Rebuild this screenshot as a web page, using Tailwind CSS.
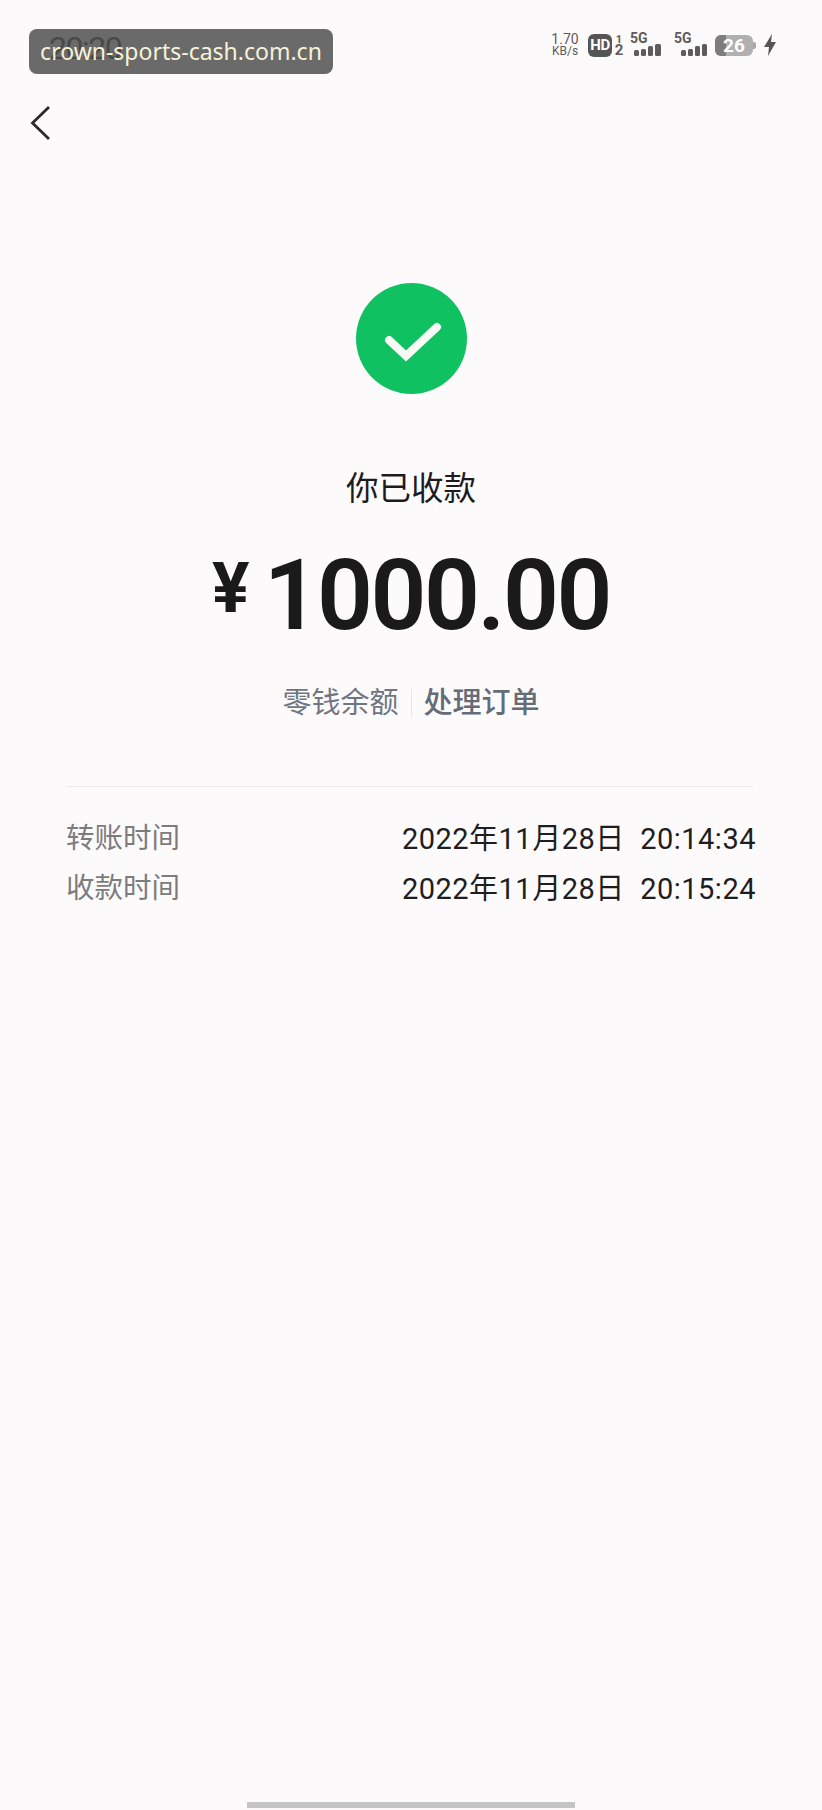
<!DOCTYPE html>
<html lang="zh-CN">
<head>
    <meta charset="UTF-8">
    <meta name="viewport" content="width=device-width, initial-scale=1.0">
    <title>你已收款</title>
    <script src="https://cdn.jsdelivr.net/npm/@tailwindcss/browser@4"></script>
</head>
<body class="bg-[#fdfafc] font-['Roboto','Noto_Sans_CJK_SC',sans-serif]">
    <div class="relative h-[1810px] w-[822px] overflow-hidden flex flex-col">
        <!-- Watermark badge over the status bar -->
        <div class="absolute left-[29px] top-[29px] w-[304px] h-[45px] rounded-[8px] bg-[#505050]/85 flex items-center justify-center text-[#f6f2d6] text-[23px] leading-none font-['Noto_Sans',sans-serif]">crown-sports-cash.com.cn</div>

        <!-- Status bar -->
        <div class="h-[80px] pl-[49px] pr-[45px] pt-[29px] flex items-start justify-between">
            <span class="text-[32px] leading-[38px] tracking-[-1.5px] text-[#222222]">20:20</span>
            <div class="flex items-center h-[28px] mt-[2px] text-[#5c5c5c]">
                <div class="w-[30px] flex flex-col items-center leading-[12px] mr-[8px]"><span class="text-[14px]">1.70</span><span class="text-[12px]">KB/s</span></div>
                <div class="w-[24px] h-[23px] rounded-[6px] bg-[#555555] text-white text-[15px] font-bold leading-[23px] text-center tracking-[-0.5px]">HD</div>
                <div class="w-[10px] ml-[2px] flex flex-col items-center font-bold text-[11px] leading-[11px]"><span>1</span><span class="text-[15px]">2</span></div>
                <svg class="ml-[6px]" width="38" height="32" viewBox="0 -3 38 32">
                    <text x="0" y="11" font-size="14" font-weight="700" fill="#5c5c5c">5G</text>
                    <rect x="4" y="18" width="5" height="6" rx="1.5" fill="#5c5c5c"/><rect x="11" y="17" width="5" height="7" rx="1.5" fill="#5c5c5c"/><rect x="18" y="14" width="5" height="10" rx="1.5" fill="#5c5c5c"/><rect x="25" y="12" width="6" height="12" rx="1.5" fill="#5c5c5c"/>
                </svg>
                <svg class="ml-[6px]" width="38" height="32" viewBox="0 -3 38 32">
                    <text x="0" y="11" font-size="14" font-weight="700" fill="#5c5c5c">5G</text>
                    <rect x="7" y="18" width="5" height="6" rx="1.5" fill="#5c5c5c"/><rect x="14" y="17" width="5" height="7" rx="1.5" fill="#5c5c5c"/><rect x="21" y="14" width="5" height="10" rx="1.5" fill="#5c5c5c"/><rect x="28" y="12" width="5" height="12" rx="1.5" fill="#5c5c5c"/>
                </svg>
                <div class="ml-[3px] relative w-[38px] h-[21px] rounded-[6px] bg-[#b0b0b0] overflow-hidden text-center text-white text-[19px] font-bold leading-[21px]">
                    <div class="absolute left-0 top-0 w-[11px] h-full bg-[#7d7d7d]"></div>
                    <span class="relative">26</span>
                </div>
                <div class="w-[3px] h-[7px] bg-[#a9a9a9] rounded-r-[2px]"></div>
                <svg class="ml-[7px]" width="14" height="24" viewBox="0 0 14 24"><path d="M9 1 L1 14 H6 L5 23 L13 9 H8 Z" fill="#555555"/></svg>
            </div>
        </div>

        <!-- Back arrow -->
        <svg class="ml-[29px] mt-[24px]" width="24" height="38" viewBox="0 0 24 38"><path d="M20 3 L3.5 19 L20 35" fill="none" stroke="#2b2b2b" stroke-width="2.8"/></svg>

        <!-- Result -->
        <div class="flex flex-col items-center">
            <div class="mt-[141px] ml-[1px] w-[111px] h-[111px] rounded-full bg-[#0fc160] flex items-center justify-center">
                <svg width="60" height="46" viewBox="0 0 60 46"><path d="M7 24 L24 40 L55 11" fill="none" stroke="#f8fbf5" stroke-width="8" stroke-linecap="round"/></svg>
            </div>
            <div class="mt-[71px] text-[32.5px] leading-[48px] text-[#1c1c1c]">你已收款</div>
            <div class="mt-[33px] flex items-center h-[100px] text-[#1a1a1a]">
                <span class="text-[70px] leading-none font-bold mr-[14px] mb-[17px]">¥</span>
                <span class="text-[98px] leading-none font-semibold tracking-[-2.5px]">1000.00</span>
            </div>
            <div class="mt-[37px] flex items-center h-[40px] text-[29px] leading-[40px] text-[#6f7680]">
                <span>零钱余额</span>
                <span class="mx-[12px] w-px h-[28px] bg-[#e6e6e8]"></span>
                <span class="font-medium text-[#646c76]">处理订单</span>
            </div>
        </div>

        <!-- Time rows -->
        <div class="mx-[66px] mt-[63px] w-[690px]">
            <div class="h-px w-[687px] bg-[#ebe9eb]"></div>
            <div class="mt-[32px] flex flex-col gap-[10px] text-[28.5px] leading-[40px]">
                <div class="flex justify-between"><span class="text-[#7c7c7c]">转账时间</span><span class="text-[#1e1e1e] whitespace-pre text-[29px] tracking-[0.5px]">2022年11月28日  20:14:34</span></div>
                <div class="flex justify-between"><span class="text-[#7c7c7c]">收款时间</span><span class="text-[#1e1e1e] whitespace-pre text-[29px] tracking-[0.5px]">2022年11月28日  20:15:24</span></div>
            </div>
        </div>

        <!-- Home indicator -->
        <div class="mt-auto mx-auto mb-[2px] w-[328px] h-[6px] bg-[#c4c4c4]"></div>
    </div>
</body>
</html>
